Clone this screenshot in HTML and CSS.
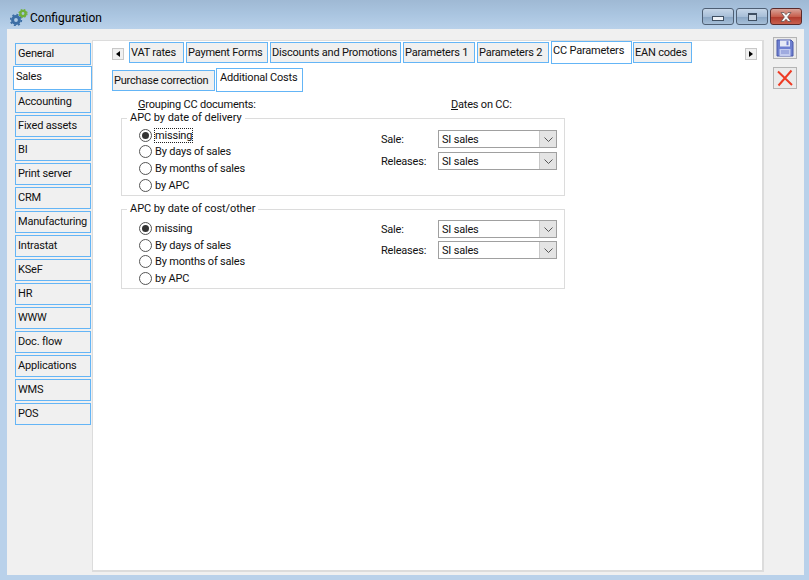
FILE: index.html
```html
<!DOCTYPE html>
<html>
<head>
    <title>Configuration</title>
    <meta charset="UTF-8">
    <link rel="stylesheet" href="styles.css">
</head>

<body>
    <div class="titlebar">
        <svg class="app-icon" width="18" height="18" viewBox="0 0 18 18">
            <circle cx="6" cy="12" r="3.4" fill="none" stroke="#3c6ea5" stroke-width="3"/>
            <circle cx="6" cy="12" r="5.4" fill="none" stroke="#3c6ea5" stroke-width="1.6" stroke-dasharray="2 2.2"/>
            <circle cx="13" cy="5.5" r="2.6" fill="none" stroke="#6fb03a" stroke-width="2.4"/>
            <circle cx="13" cy="5.5" r="4" fill="none" stroke="#6fb03a" stroke-width="1.2" stroke-dasharray="1.6 1.6"/>
        </svg>
        <span class="title">Configuration</span>
        <div class="win-buttons">
            <div class="win-btn"><span class="min-glyph"></span></div>
            <div class="win-btn"><span class="max-glyph"></span></div>
            <div class="win-btn win-close">
                <svg width="16" height="10" viewBox="0 0 16 10">
                    <path d="M3 0.5h3l2 2.2 2-2.2h3l-3.4 4.5 3.4 4.5h-3l-2-2.3-2 2.3h-3l3.4-4.5z" fill="#f4f4f4" stroke="#5a4a4a" stroke-width="0.7"/>
                </svg>
            </div>
        </div>
    </div>

    <div class="window">
        <!-- Left menu -->
        <div class="side">
            <div class="side-item">General</div>
            <div class="side-item active">Sales</div>
            <div class="side-item">Accounting</div>
            <div class="side-item">Fixed assets</div>
            <div class="side-item">BI</div>
            <div class="side-item">Print server</div>
            <div class="side-item">CRM</div>
            <div class="side-item">Manufacturing</div>
            <div class="side-item">Intrastat</div>
            <div class="side-item">KSeF</div>
            <div class="side-item">HR</div>
            <div class="side-item">WWW</div>
            <div class="side-item">Doc. flow</div>
            <div class="side-item">Applications</div>
            <div class="side-item">WMS</div>
            <div class="side-item">POS</div>
        </div>

        <!-- Main panel -->
        <div class="panel">
            <div class="tabs">
                <div class="scroll-btn"><span class="arrow-left"></span></div>
                <div class="tab w-vat">VAT rates</div>
                <div class="tab w-pay">Payment Forms</div>
                <div class="tab w-disc">Discounts and Promotions</div>
                <div class="tab w-par1">Parameters 1</div>
                <div class="tab w-par2">Parameters 2</div>
                <div class="tab active w-cc">CC Parameters</div>
                <div class="tab w-ean">EAN codes</div>
                <div class="scroll-btn scroll-right"><span class="arrow-right"></span></div>
            </div>

            <div class="subtabs">
                <div class="tab w-pur">Purchase correction</div>
                <div class="tab active w-add">Additional Costs</div>
            </div>

            <div class="headers">
                <span class="head-left"><u>G</u>rouping CC documents:</span>
                <span><u>D</u>ates on CC:</span>
            </div>

            <fieldset class="group first">
                <legend>APC by date of delivery</legend>
                <div class="radios">
                    <div class="radio-row"><span class="radio on"></span><span class="focus">missing</span></div>
                    <div class="radio-row"><span class="radio"></span><span>By days of sales</span></div>
                    <div class="radio-row"><span class="radio"></span><span>By months of sales</span></div>
                    <div class="radio-row"><span class="radio"></span><span>by APC</span></div>
                </div>
                <div class="dates">
                    <div class="date-row"><span class="date-label">Sale:</span><div class="combo"><span class="combo-text">SI sales</span><span class="combo-btn"><svg width="9" height="5" viewBox="0 0 9 5"><path d="M0.5 0.5l4 4 4-4" fill="none" stroke="#555" stroke-width="1"/></svg></span></div></div>
                    <div class="date-row"><span class="date-label">Releases:</span><div class="combo"><span class="combo-text">SI sales</span><span class="combo-btn"><svg width="9" height="5" viewBox="0 0 9 5"><path d="M0.5 0.5l4 4 4-4" fill="none" stroke="#555" stroke-width="1"/></svg></span></div></div>
                </div>
            </fieldset>

            <fieldset class="group second">
                <legend>APC by date of cost/other</legend>
                <div class="radios">
                    <div class="radio-row"><span class="radio on"></span><span>missing</span></div>
                    <div class="radio-row"><span class="radio"></span><span>By days of sales</span></div>
                    <div class="radio-row"><span class="radio"></span><span>By months of sales</span></div>
                    <div class="radio-row"><span class="radio"></span><span>by APC</span></div>
                </div>
                <div class="dates">
                    <div class="date-row"><span class="date-label">Sale:</span><div class="combo"><span class="combo-text">SI sales</span><span class="combo-btn"><svg width="9" height="5" viewBox="0 0 9 5"><path d="M0.5 0.5l4 4 4-4" fill="none" stroke="#555" stroke-width="1"/></svg></span></div></div>
                    <div class="date-row"><span class="date-label">Releases:</span><div class="combo"><span class="combo-text">SI sales</span><span class="combo-btn"><svg width="9" height="5" viewBox="0 0 9 5"><path d="M0.5 0.5l4 4 4-4" fill="none" stroke="#555" stroke-width="1"/></svg></span></div></div>
                </div>
            </fieldset>
        </div>

        <!-- Right toolbar -->
        <div class="tools">
            <div class="tool-btn">
                <svg width="18" height="18" viewBox="0 0 18 18">
                    <path d="M1 1h14l2 2v14H1z" fill="#6d7fd0" stroke="#4a58a8" stroke-width="1"/>
                    <rect x="4" y="1.5" width="10" height="6" fill="#e6eaf6"/>
                    <rect x="10.5" y="2.2" width="2" height="4" fill="#6d7fd0"/>
                    <rect x="3.5" y="10" width="11" height="7" fill="#c3cbee"/>
                    <path d="M5 12h8M5 14h8" stroke="#7d8ad0" stroke-width="1"/>
                </svg>
            </div>
            <div class="tool-btn">
                <svg width="18" height="18" viewBox="0 0 18 18">
                    <path d="M2 2.5l14 13.5M15.5 1.5L2.5 16.5" fill="none" stroke="#ee3b24" stroke-width="2"/>
                </svg>
            </div>
        </div>
    </div>
</body>
</html>
```

FILE: styles.css
```css
/* General */
html, body {
    height: 100%;
}

body {
    margin: 0;
    background-color: #b9d1ea;
    font-family: Roboto, "Noto Sans", sans-serif;
    font-size: 11px;
    letter-spacing: -0.2px;
    color: #111;
    display: flex;
    flex-direction: column;
    overflow: hidden;
}

/* Title bar */
.titlebar {
    height: 29px;
    box-sizing: border-box;
    flex: none;
    display: flex;
    align-items: center;
    padding: 5px 7px 0 10px;
    background: linear-gradient(to bottom, #9fb9d4 0%, #aac5e0 50%, #b9d1ea 100%);
}

.app-icon {
    margin-right: 2px;
}

.title {
    font-size: 12px;
    letter-spacing: 0;
    color: #000;
    margin-top: 1px;
}

.win-buttons {
    margin-left: auto;
    display: flex;
    gap: 2px;
    margin-bottom: 1px;
}

.win-btn {
    width: 32px;
    height: 17px;
    border: 1px solid #4e5f74;
    border-radius: 3px;
    box-sizing: border-box;
    background: linear-gradient(to bottom, #c6d6e8 0%, #a8bfd8 50%, #8aa6c4 52%, #a6bfd8 100%);
    display: flex;
    align-items: center;
    justify-content: center;
}

.win-close {
    border-color: #5a2a2a;
    background: linear-gradient(to bottom, #d8a49a 0%, #c8604e 50%, #b03a2c 52%, #c8604e 100%);
}

.min-glyph {
    width: 10px;
    height: 3px;
    margin-top: 4px;
    border: 1px solid #3f4f62;
    background-color: #eef2f7;
}

.max-glyph {
    width: 7px;
    height: 5px;
    border: 1px solid #3f4f62;
    border-top-width: 2px;
    background-color: #c5d3e2;
}

/* Window body */
.window {
    flex: 1;
    display: flex;
    margin: 0 5px 5px 7px;
    background-color: #f0f0f0;
}

/* Left menu */
.side {
    width: 85px;
    flex: none;
    padding: 14px 0 0 8px;
    box-sizing: border-box;
}

.side-item {
    width: 76px;
    height: 22px;
    margin-bottom: 2px;
    border: 1px solid #64b5f6;
    box-sizing: border-box;
    background-color: #f0f0f0;
    padding-left: 2px;
    line-height: 19px;
    white-space: nowrap;
}

.side-item.active {
    width: 79px;
    height: 24px;
    margin: -1px 0 1px -2px;
    background-color: #fff;
    position: relative;
}

/* Main panel */
.panel {
    width: 672px;
    margin-top: 11px;
    margin-bottom: 3px;
    flex: none;
    box-sizing: border-box;
    background-color: #fff;
    border-left: 1px solid #dcdcdc;
    border-top: 1px solid #dcdcdc;
    border-right: 2px solid #dcdcdc;
    border-bottom: 2px solid #dcdcdc;
    padding: 0 0 0 19px;
}

.tabs {
    display: flex;
    align-items: center;
    height: 23px;
}

.tab {
    height: 21px;
    border: 1px solid #64b5f6;
    box-sizing: border-box;
    background-color: #f0f0f0;
    padding-left: 1px;
    line-height: 20px;
    white-space: nowrap;
    margin-right: 2px;
}

.tab.active {
    background-color: #fff;
    height: 23px;
    line-height: 18px;
    margin-right: 1px;
}

.w-vat { width: 55px; }
.w-pay { width: 82px; }
.w-disc { width: 131px; }
.w-par1 { width: 72px; }
.w-par2 { width: 72px; }
.w-cc { width: 81px; }
.w-ean { width: 59px; }

.subtabs .w-pur {
    width: 103px;
    margin: 0 1px 1px 0;
}

.subtabs .w-add {
    width: 87px;
    height: 24px;
    padding-left: 3px;
}

.scroll-btn {
    width: 12px;
    height: 12px;
    margin: 3px 5px 0 0;
    border: 1px solid #c8c8c8;
    background-color: #f0f0f0;
    box-sizing: border-box;
    display: flex;
    align-items: center;
    justify-content: center;
}

.scroll-right {
    margin: 3px 5px 0 auto;
}

.arrow-left {
    border: 3px solid transparent;
    border-right: 4px solid #000;
    border-left: 0;
}

.arrow-right {
    border: 3px solid transparent;
    border-left: 4px solid #000;
    border-right: 0;
}

.subtabs {
    display: flex;
    align-items: flex-end;
    height: 28px;
}

.headers {
    display: flex;
    margin-top: 5px;
    height: 16px;
    line-height: 16px;
}

.head-left {
    width: 313px;
    margin-left: 26px;
}

/* Group boxes */
.group {
    width: 444px;
    box-sizing: border-box;
    margin: -2px 0 0 9px;
    padding: 2px 0 2px;
    border: 1px solid #dcdcdc;
    display: flex;
}

.group.second {
    margin-top: 6px;
    padding-top: 4px;
    padding-bottom: 1px;
}

.group legend {
    margin-left: 5px;
    padding: 0 3px;
    line-height: 14px;
    letter-spacing: -0.05px;
}

.radios {
    width: 259px;
    padding-left: 17px;
    box-sizing: border-box;
}

.radio-row {
    height: 16.6px;
    display: flex;
    align-items: center;
    gap: 3px;
}

.radio {
    width: 11px;
    height: 11px;
    border: 1px solid #555;
    border-radius: 50%;
    background-color: #fff;
    display: block;
    position: relative;
    flex: none;
}

.radio.on::after {
    content: "";
    position: absolute;
    left: 2px;
    top: 2px;
    width: 7px;
    height: 7px;
    border-radius: 50%;
    background-color: #333;
}

.focus {
    outline: 1px dotted #222;
    line-height: 13px;
}

.dates {
    display: flex;
    flex-direction: column;
    gap: 4px;
    margin-top: 3px;
}

.second .dates {
    margin-top: 0;
    gap: 3px;
}

.date-row {
    display: flex;
    align-items: center;
}

.date-label {
    width: 57px;
}

.combo {
    width: 119px;
    height: 18px;
    box-sizing: border-box;
    border: 1px solid #a0a0a0;
    background-color: #fff;
    display: flex;
    line-height: 17px;
}

.combo-text {
    flex: 1;
    padding-left: 3px;
}

.combo-btn {
    width: 16px;
    background-color: #e4e4e4;
    border-left: 1px solid #c8c8c8;
    display: flex;
    align-items: center;
    justify-content: center;
}

/* Right toolbar */
.tools {
    flex: none;
    padding: 8px 0 0 9px;
    display: flex;
    flex-direction: column;
    gap: 8px;
}

.tool-btn {
    width: 24px;
    height: 22px;
    border: 1px solid #b4b4b4;
    box-sizing: border-box;
    background-color: #eaeaea;
    display: flex;
    align-items: center;
    justify-content: center;
}
```
